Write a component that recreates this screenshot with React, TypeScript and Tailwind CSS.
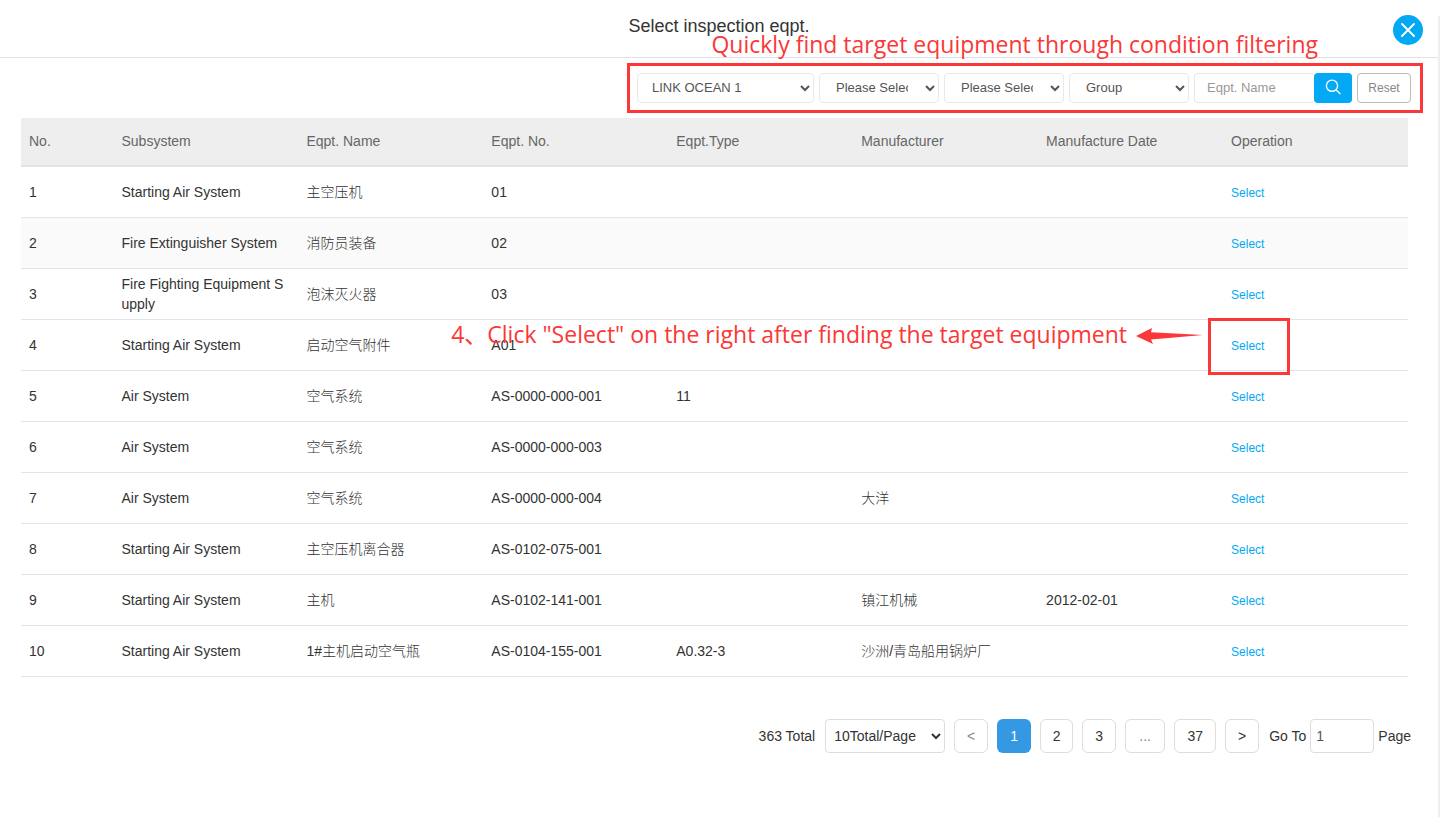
import React, { useState } from 'react';

type Equipment = {
    subsystem: string;
    name: string;
    no: string;
    type?: string;
    manufacturer?: string;
    date?: string;
};

const columns = ['No.', 'Subsystem', 'Eqpt. Name', 'Eqpt. No.', 'Eqpt.Type', 'Manufacturer', 'Manufacture Date', 'Operation'];

const equipment: Equipment[] = [
    { subsystem: 'Starting Air System', name: '主空压机', no: '01' },
    { subsystem: 'Fire Extinguisher System', name: '消防员装备', no: '02' },
    { subsystem: 'Fire Fighting Equipment Supply', name: '泡沫灭火器', no: '03' },
    { subsystem: 'Starting Air System', name: '启动空气附件', no: 'A01' },
    { subsystem: 'Air System', name: '空气系统', no: 'AS-0000-000-001', type: '11' },
    { subsystem: 'Air System', name: '空气系统', no: 'AS-0000-000-003' },
    { subsystem: 'Air System', name: '空气系统', no: 'AS-0000-000-004', manufacturer: '大洋' },
    { subsystem: 'Starting Air System', name: '主空压机离合器', no: 'AS-0102-075-001' },
    { subsystem: 'Starting Air System', name: '主机', no: 'AS-0102-141-001', manufacturer: '镇江机械', date: '2012-02-01' },
    { subsystem: 'Starting Air System', name: '1#主机启动空气瓶', no: 'AS-0104-155-001', type: 'A0.32-3', manufacturer: '沙洲/青岛船用锅炉厂' },
];

const FilterSelect = ({ label, options, className }: { label: string; options: string[]; className: string }) => (
    <select aria-label={label} className={`h-[30px] rounded border border-[#e8e8e8] bg-white pr-3.5 pb-0.5 text-[13px] text-[#555] ${className}`}>
        {options.map((option) => (
            <option key={option}>{option}</option>
        ))}
    </select>
);

const Header = () => (
    <header className="relative h-[58px] border-b border-[#e2e2e2] pt-3 text-center">
        <h1 className="text-lg leading-7 text-[#333]">Select inspection eqpt.</h1>
        <button type="button" aria-label="Close" className="absolute top-[15px] right-[15px] flex size-[30px] items-center justify-center rounded-full bg-[#03a9f4]">
            <svg width="14" height="14" viewBox="0 0 14 14" fill="none" stroke="white" strokeWidth="1.8" strokeLinecap="round">
                <path d="M1 1l12 12M13 1l-12 12" />
            </svg>
        </button>
    </header>
);

const Filters = () => (
    <form className="relative mt-[5px] mr-[15px] ml-auto flex w-fit border-3 border-[#fb3737] py-[7px] pr-[9px] pl-[7px]" onSubmit={(e) => e.preventDefault()}>
        <Note className="right-[102px] bottom-full mb-1.5">Quickly find target equipment through condition filtering</Note>
        <div className="flex gap-[5px]">
            <FilterSelect label="Vessel" options={['LINK OCEAN 1']} className="w-[177px] pl-2.5" />
            <FilterSelect label="System" options={['Please Select']} className="w-[120px] pl-3" />
            <FilterSelect label="Subsystem" options={['Please Select']} className="w-[120px] pl-3" />
            <FilterSelect label="Group" options={['Group']} className="w-[120px] pl-3" />
            <div className="flex">
                <input aria-label="Eqpt. Name" placeholder="Eqpt. Name" className="h-[30px] w-[120px] rounded-l border border-r-0 border-[#e8e8e8] px-3 pb-0.5 text-[13px] placeholder:text-[#999]" />
                <button type="submit" aria-label="Search" className="flex h-[30px] w-[38px] items-center justify-center rounded bg-[#03a9f4] pb-0.5">
                    <svg width="16" height="16" viewBox="0 0 16 16" fill="none" stroke="white" strokeWidth="1.4" strokeLinecap="round">
                        <circle cx="7" cy="6.7" r="5.6" />
                        <path d="M11 10.8l4 4" />
                    </svg>
                </button>
            </div>
            <button type="reset" className="h-[30px] w-[54px] rounded border border-[#bbb] text-xs text-[#888]">
                Reset
            </button>
        </div>
    </form>
);

/* Red instruction text lying over the page */
const Note = ({ className, children }: { className: string; children: React.ReactNode }) => (
    <span className={`pointer-events-none absolute z-10 font-['Open_Sans','Noto_Sans_CJK_SC',sans-serif] text-[23px] leading-8 whitespace-nowrap text-[#fb3737] ${className}`}>
        {children}
    </span>
);

const SelectHint = () => (
    <>
        <span className="pointer-events-none absolute -top-0.5 -left-[15px] h-[57px] w-[82px] border-3 border-[#fb3737]" />
        <Note className="-top-0.5 right-full mr-5 flex items-center gap-[9px]">
            4、Click "Select" on the right after finding the target equipment
            <svg className="mt-1" width="67" height="16" viewBox="0 0 67 16" fill="#fb3737">
                <path d="M0 8L16 0L15 4.2L67 7L15 11.6L17 16Z" />
            </svg>
        </Note>
    </>
);

const EquipmentTable = () => (
    <table className="mt-[5px] w-full table-fixed border-collapse text-left text-sm leading-5 text-[#333]">
        <colgroup>
            <col className="w-[6.67%]" />
            {columns.slice(1).map((column) => (
                <col key={column} />
            ))}
        </colgroup>
        <thead>
            <tr className="h-12 border-b-2 border-[#dfe5ea] bg-[#eee] text-[#666]">
                {columns.map((column) => (
                    <th key={column} className="px-2 pb-0.5 font-normal">{column}</th>
                ))}
            </tr>
        </thead>
        <tbody>
            {equipment.map((item, index) => (
                <tr key={item.no} className={`h-[51px] border-b border-[#e2e5e8] ${index === 1 ? 'bg-[#fafafa]' : ''}`}>
                    <td className="px-2">{index + 1}</td>
                    <td className="pr-3 pl-2 break-all">{item.subsystem}</td>
                    <td className="px-2 font-light">{item.name}</td>
                    <td className="px-2">{item.no}</td>
                    <td className="px-2">{item.type}</td>
                    <td className="px-2 font-light">{item.manufacturer}</td>
                    <td className="px-2">{item.date}</td>
                    <td className="relative px-2">
                        <button type="button" className="text-xs text-[#03a9f4]">Select</button>
                        {index === 3 && <SelectHint />}
                    </td>
                </tr>
            ))}
        </tbody>
    </table>
);

const pages = [
    { label: '<', width: 'w-[34px]' },
    { label: '1', width: 'w-[34px]' },
    { label: '2', width: 'w-[33px]' },
    { label: '3', width: 'w-[34px]' },
    { label: '...', width: 'w-10' },
    { label: '37', width: 'w-[42px]' },
    { label: '>', width: 'w-[34px]' },
];

const Pagination = () => {
    const [current, setCurrent] = useState('1');

    return (
        <nav className="mt-[42px] mr-[27px] flex items-center justify-end gap-2.5 text-sm text-[#333]">
            <span>363 Total</span>
            <div className="flex gap-[9px]">
                <select aria-label="Rows per page" className="h-[34px] w-[120px] rounded border border-[#ddd] bg-white pl-1">
                    <option>10Total/Page</option>
                </select>
                {pages.map(({ label, width }) => {
                    const muted = label === '<' || label === '...';
                    const color = label === current ? 'bg-[#3498e3] text-white' : `border border-[#ddd] ${muted ? 'text-[#888]' : ''}`;
                    return (
                        <button
                            key={label}
                            type="button"
                            disabled={muted}
                            onClick={() => label !== '>' && setCurrent(label)}
                            className={`h-[34px] rounded-md ${width} ${color}`}
                        >
                            {label}
                        </button>
                    );
                })}
            </div>
            <label className="flex items-center gap-1">
                Go To
                <input defaultValue="1" className="h-[34px] w-16 rounded border border-[#ddd] px-[5px] text-[#555]" />
                Page
            </label>
        </nav>
    );
};

const App: React.FC = () => (
    <div className="flex min-h-screen bg-white font-['Liberation_Sans','Noto_Sans_CJK_SC',sans-serif]">
        <main className="min-w-0 flex-1">
            <Header />
            <Filters />
            <div className="pr-[30px] pl-[21px]">
                <EquipmentTable />
            </div>
            <Pagination />
        </main>
        <div className="mt-4 w-0.5 bg-[#eee]" />
    </div>
);

export default App;
